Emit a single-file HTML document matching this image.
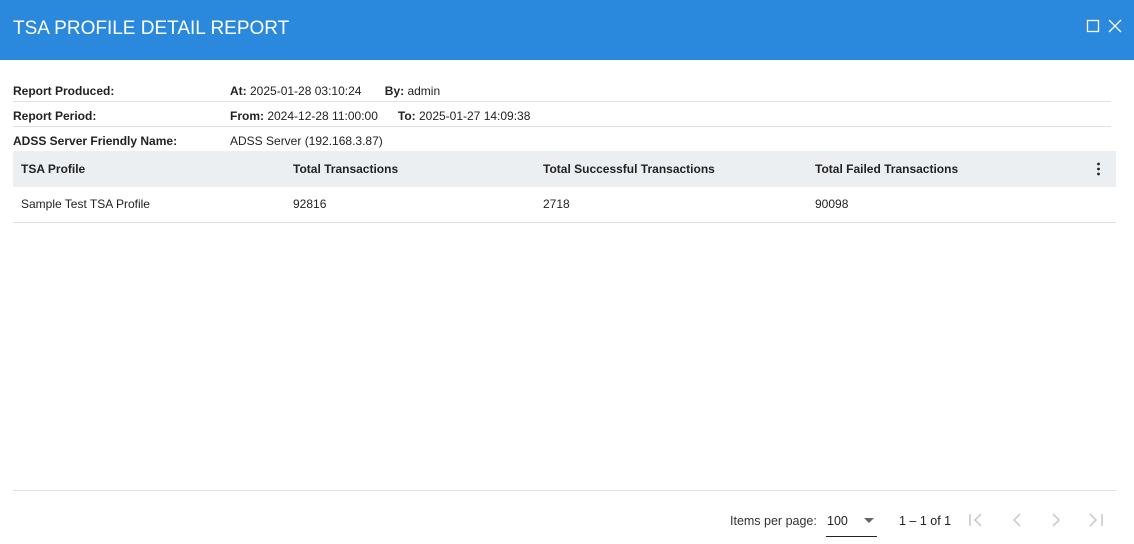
<!DOCTYPE html>
<html><head><style>
*{margin:0;padding:0;box-sizing:border-box}
body{width:1134px;height:544px;background:#fff;font-family:"Liberation Sans",sans-serif;color:#222;position:relative;overflow:hidden;font-size:12px}
.hdr{position:absolute;left:0;top:0;width:1134px;height:60px;background:#2a88dd}
.hdr h1{position:absolute;left:13px;top:18px;color:#fff;font-weight:normal;font-size:19px;letter-spacing:0}
.a{position:absolute;font-size:12px;white-space:nowrap}
b{font-weight:bold}
.line{position:absolute;left:13px;width:1098px;height:1px;background:#e0e0e0}
.th{position:absolute;left:13px;top:151px;width:1103px;height:36px;background:#eceff1}
</style></head><body>
<div class="hdr"><h1>TSA PROFILE DETAIL REPORT</h1>
<svg style="position:absolute;left:1086px;top:19px" width="40" height="16"><rect x="1.5" y="1.5" width="11" height="11" fill="none" stroke="#fff" stroke-width="1.3"/><path d="M23 1L35 13M35 1L23 13" stroke="#fff" stroke-width="1.3"/></svg>
</div>
<div class="a" style="left:13px;top:84px"><b>Report Produced:</b></div>
<div class="a" style="left:230px;top:84px"><b>At:</b> 2025-01-28 03:10:24 &nbsp;&nbsp;&nbsp;&nbsp;&nbsp;&nbsp;<b>By:</b> admin</div>
<div class="line" style="top:101px"></div>
<div class="a" style="left:13px;top:109px"><b>Report Period:</b></div>
<div class="a" style="left:230px;top:109px"><b>From:</b> 2024-12-28 11:00:00 &nbsp;&nbsp;&nbsp;&nbsp;&nbsp;<b>To:</b> 2025-01-27 14:09:38</div>
<div class="line" style="top:126px"></div>
<div class="a" style="left:13px;top:134px"><b>ADSS Server Friendly Name:</b></div>
<div class="a" style="left:230px;top:134px">ADSS Server (192.168.3.87)</div>
<div class="th"></div>
<div class="a" style="left:21px;top:162px"><b>TSA Profile</b></div>
<div class="a" style="left:293px;top:162px"><b>Total Transactions</b></div>
<div class="a" style="left:543px;top:162px"><b>Total Successful Transactions</b></div>
<div class="a" style="left:815px;top:162px"><b>Total Failed Transactions</b></div>
<svg style="position:absolute;left:1096px;top:162px" width="6" height="14"><circle cx="2.5" cy="2" r="1.4" fill="#222"/><circle cx="2.5" cy="7" r="1.4" fill="#222"/><circle cx="2.5" cy="12" r="1.4" fill="#222"/></svg>
<div class="a" style="left:21px;top:197px">Sample Test TSA Profile</div>
<div class="a" style="left:293px;top:197px">92816</div>
<div class="a" style="left:543px;top:197px">2718</div>
<div class="a" style="left:815px;top:197px">90098</div>
<div class="line" style="top:222px;width:1103px"></div>
<div class="line" style="top:490px;width:1103px"></div>
<div class="a" style="left:730px;top:514px;color:#333;font-size:12.5px">Items per page:</div>
<div class="a" style="left:827px;top:514px;font-size:12.5px">100</div>
<svg style="position:absolute;left:864px;top:518px" width="12" height="6"><path d="M0 0L10 0L5 5Z" fill="#666"/></svg>
<div style="position:absolute;left:826px;top:536px;width:51px;height:1px;background:#222"></div>
<div class="a" style="left:899px;top:514px;font-size:12.5px">1 – 1 of 1</div>
<svg style="position:absolute;left:968px;top:512px" width="140" height="16" fill="none" stroke="#ccc" stroke-width="1.6"><path d="M2 2V14M13 2L7 8L13 14"/><path d="M52 2L46 8L52 14"/><path d="M85 2L91 8L85 14"/><path d="M122 2L128 8L122 14M134 2V14"/></svg>
</body></html>
